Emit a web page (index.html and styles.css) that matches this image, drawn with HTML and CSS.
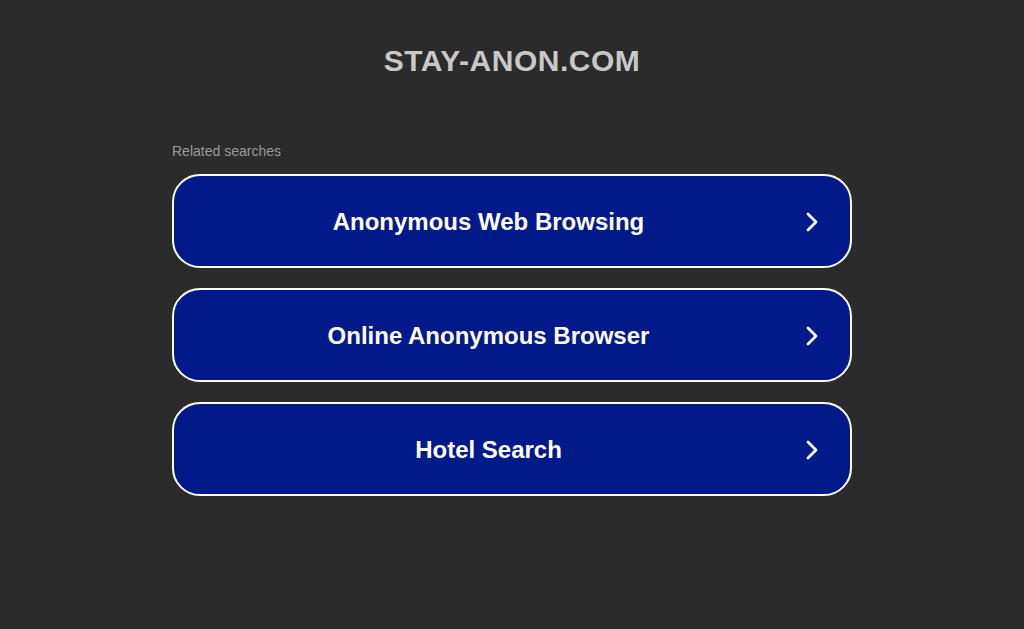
FILE: index.html
```html
<!DOCTYPE html>
<html lang="en">
<head>
  <meta charset="UTF-8" />
  <meta name="viewport" content="width=device-width, initial-scale=1.0"/>
  <title>stay-anon.com</title>
  <link rel="stylesheet" href="styles.css">
</head>
<body>

  <header>
    <h1>STAY-ANON.COM</h1>
  </header>

  <main>
    <p class="related">Related searches</p>

    <a class="search-link" href="#">
      <span class="label">Anonymous Web Browsing</span>
      <svg class="arrow" width="14" height="22" viewBox="0 0 14 22"><path d="M3 3 L11 11 L3 19" fill="none" stroke="#fff" stroke-width="2.8" stroke-linecap="round" stroke-linejoin="round"/></svg>
    </a>
    <a class="search-link" href="#">
      <span class="label">Online Anonymous Browser</span>
      <svg class="arrow" width="14" height="22" viewBox="0 0 14 22"><path d="M3 3 L11 11 L3 19" fill="none" stroke="#fff" stroke-width="2.8" stroke-linecap="round" stroke-linejoin="round"/></svg>
    </a>
    <a class="search-link" href="#">
      <span class="label">Hotel Search</span>
      <svg class="arrow" width="14" height="22" viewBox="0 0 14 22"><path d="M3 3 L11 11 L3 19" fill="none" stroke="#fff" stroke-width="2.8" stroke-linecap="round" stroke-linejoin="round"/></svg>
    </a>
  </main>

</body>
</html>
```

FILE: styles.css
```css
body {
  margin: 0;
  background: #2b2b2b;
  font-family: 'Liberation Sans', Arial, sans-serif;
  color: #fff;
}

header {
  text-align: center;
  padding-top: 45px;
}

header h1 {
  margin: 0;
  font-size: 30px;
  line-height: 32px;
  font-weight: bold;
  color: #c8c8c8;
  letter-spacing: 0.5px;
}

main {
  width: 680px;
  margin: 0 auto;
  padding-top: 66px;
}

.related {
  margin: 0 0 15px 0;
  font-size: 14px;
  line-height: 16px;
  color: #9a9a9a;
}

.search-link {
  display: flex;
  align-items: center;
  box-sizing: border-box;
  height: 94px;
  margin-bottom: 20px;
  padding: 2px 31px 0 0;
  border: 2px solid #fff;
  border-radius: 28px;
  background: #011989;
  color: #fff;
  text-decoration: none;
}

.search-link .label {
  flex: 1;
  text-align: center;
  font-size: 24px;
  font-weight: bold;
}

.search-link .arrow {
  flex: none;
  margin-left: 2px;
}
```
